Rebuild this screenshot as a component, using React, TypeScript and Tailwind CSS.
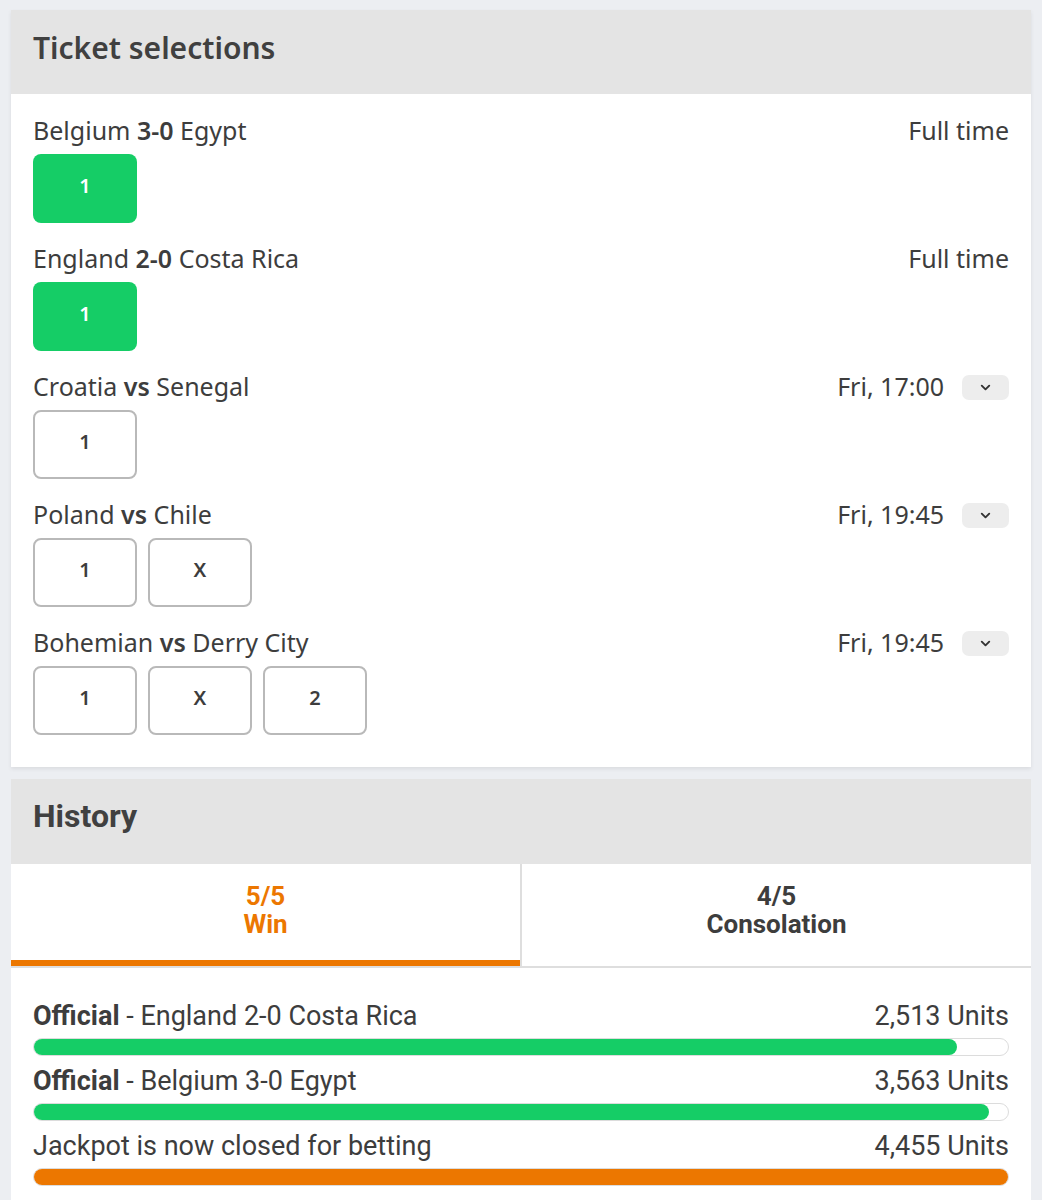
import { ChevronDown } from "lucide-react";

type Pick = { label: string; active?: boolean };

type Match = {
  home: string;
  mid: string;
  away: string;
  status: string;
  expandable?: boolean;
  picks: Pick[];
};

const matches: Match[] = [
  { home: "Belgium", mid: "3-0", away: "Egypt", status: "Full time", picks: [{ label: "1", active: true }] },
  { home: "England", mid: "2-0", away: "Costa Rica", status: "Full time", picks: [{ label: "1", active: true }] },
  { home: "Croatia", mid: "vs", away: "Senegal", status: "Fri, 17:00", expandable: true, picks: [{ label: "1" }] },
  { home: "Poland", mid: "vs", away: "Chile", status: "Fri, 19:45", expandable: true, picks: [{ label: "1" }, { label: "X" }] },
  {
    home: "Bohemian",
    mid: "vs",
    away: "Derry City",
    status: "Fri, 19:45",
    expandable: true,
    picks: [{ label: "1" }, { label: "X" }, { label: "2" }],
  },
];

const history = [
  { bold: "Official", rest: " - England 2-0 Costa Rica", units: "2,513 Units", pct: 94.8, color: "bg-[#15cd66]" },
  { bold: "Official", rest: " - Belgium 3-0 Egypt", units: "3,563 Units", pct: 98, color: "bg-[#15cd66]" },
  { bold: "", rest: "Jackpot is now closed for betting", units: "4,455 Units", pct: 100, color: "bg-[#ec7700]" },
];

function MatchRow({ m }: { m: Match }) {
  return (
    <div className="h-[128px]">
      <div className="flex h-[30px] items-center justify-between">
        <span className="text-[25px] text-[#3d3d3d]">
          {m.home} <b className="font-semibold">{m.mid}</b> {m.away}
        </span>
        <div className="flex items-center gap-[18px]">
          <span className="text-[25px] text-[#3d3d3d]">{m.status}</span>
          {m.expandable && (
            <span className="flex h-[25px] w-[47px] items-center justify-center rounded-[7px] bg-[#ededed]">
              <ChevronDown className="h-[15px] w-[15px] text-[#333]" strokeWidth={3} />
            </span>
          )}
        </div>
      </div>
      <div className="mt-[8px] flex gap-[11px]">
        {m.picks.map((p, i) => (
          <div
            key={i}
            className={
              p.active
                ? "flex h-[69px] w-[104px] items-center justify-center rounded-[8px] bg-[#15cd66] pb-[5px] text-[20px] font-semibold text-white"
                : "flex h-[69px] w-[104px] items-center justify-center rounded-[8px] border-2 border-[#b9b9b9] bg-white pb-[5px] text-[20px] font-semibold text-[#3d3d3d]"
            }
          >
            {p.label}
          </div>
        ))}
      </div>
    </div>
  );
}

export default function App() {
  return (
    <div
      className="min-h-[1200px] bg-[#eceef2] px-[11px] pt-[10px]"
      style={{ fontFamily: "'Noto Sans', Roboto, sans-serif" }}
    >
      <section className="bg-white shadow-[0_2px_4px_rgba(0,0,0,0.08)]">
        <div className="flex h-[84px] items-center bg-[#e4e4e4] px-[22px] pb-[10px]">
          <h2 className="text-[30px] font-semibold text-[#404040]">Ticket selections</h2>
        </div>
        <div className="px-[22px] pt-[22px] pb-[11px]">
          {matches.map((m, i) => (
            <MatchRow key={i} m={m} />
          ))}
        </div>
      </section>

      <section className="mt-[12px] bg-white" style={{ fontFamily: "Roboto, sans-serif" }}>
        <div className="flex h-[85px] items-center bg-[#e4e4e4] px-[22px] pb-[12px]">
          <h2 className="text-[32px] font-bold text-[#404040]">History</h2>
        </div>
        <div className="flex border-b-2 border-[#dedede]">
          <div className="flex h-[102px] flex-1 flex-col items-center justify-center border-b-[6px] border-[#ec7700] pb-[4px] text-[26px] leading-[28px] font-bold text-[#ec7700]">
            <span>5/5</span>
            <span>Win</span>
          </div>
          <div className="flex h-[102px] flex-1 flex-col items-center justify-center border-l-2 border-[#dedede] pb-[10px] text-[26px] leading-[28px] font-bold text-[#3d3d3d]">
            <span>4/5</span>
            <span>Consolation</span>
          </div>
        </div>
        <div className="px-[22px] pt-[33px] pb-[14px]">
          {history.map((h, i) => (
            <div key={i} className="mb-[10px]">
              <div className="flex items-center justify-between text-[27px] leading-[30px] text-[#3d3d3d]">
                <span>
                  {h.bold && <b className="font-bold">{h.bold}</b>}
                  {h.rest}
                </span>
                <span>{h.units}</span>
              </div>
              <div className="mt-[7px] h-[18px] rounded-full border border-[#dcdcdc] bg-white">
                <div className={`h-full rounded-full ${h.color}`} style={{ width: `${h.pct}%` }} />
              </div>
            </div>
          ))}
        </div>
      </section>
    </div>
  );
}
